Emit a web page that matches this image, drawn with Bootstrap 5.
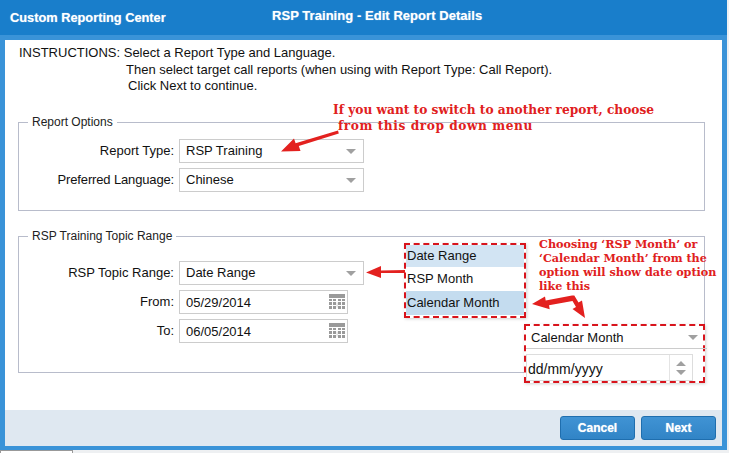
<!DOCTYPE html>
<html lang="en"><head><meta charset="utf-8"><title>RSP Training</title>
<link href="https://cdn.jsdelivr.net/npm/bootstrap@5.3.0/dist/css/bootstrap.min.css" rel="stylesheet">
<style>
html,body{height:453px;overflow:hidden;background:#eef0f2}
body{font:13px/16px "Liberation Sans",Arial,sans-serif;color:#111;position:relative}
.shell{width:727px;height:450px;background:#3a93d8;padding:0 5px 4px;display:flex;flex-direction:column}
.head{height:40px;margin:0 -5px;background:#197ecb;border-bottom:5px solid #3a93d8;color:#fff;font-weight:700;font-size:12.8px;text-shadow:0 0 1px rgba(255,255,255,.6);padding-left:10px}
.head-a{width:262px;padding-top:10px}
.head-b{padding-top:8px;font-size:13px;letter-spacing:.05px}
.body-w{background:#fff;flex:1;padding:4px 17px 0 13px;position:relative}
.instr{height:49px;margin-bottom:22px;padding-top:1px;line-height:16.5px}
.indent-z{padding-left:1px}
.indent-a{padding-left:108px}.indent-b{padding-left:110px}
.group-box{border:1px solid #b8bccb;padding:0;margin:0;position:relative;min-width:0}
.group-one{height:96px}
.group-two{height:144px;margin-top:18px}
.group-box legend{float:none;width:auto;font-size:12px;line-height:14px;margin:-7px 0 0 9px;padding:0 4px;color:#222}
.frow{display:flex;align-items:center;gap:5px;margin-bottom:5px}
.frow label{width:155px;text-align:right;margin:0}
.tight-label{letter-spacing:-.15px}
.group-one .rows-w{padding-top:10px}
.group-two .rows-w{padding-top:18px}
.sel{width:185px;height:24px;border-radius:0;border:1px solid #ccc;padding:0 20px 0 6px;font-size:13px;line-height:22px;color:#111;box-shadow:none;background-color:#fff;
background-image:url("data:image/svg+xml,%3Csvg xmlns='http://www.w3.org/2000/svg' width='10' height='5'%3E%3Cpath d='M0 0h10L5 5z' fill='%23a0a0a0'/%3E%3C/svg%3E");background-size:10px 5px;background-position:right 7px center}
.dt{position:relative;width:169px}
.dt input{height:24px;border-radius:0;border:1px solid #ccc;padding:0 6px;font-size:13px;color:#111}
.dt svg{position:absolute;right:3px;top:4px}
.foot{height:36px;background:#dfe8f1;display:flex;justify-content:flex-end;align-items:center;gap:6px;padding:0 6px 0 0}
.bt{width:75px;height:24px;padding:0;background:linear-gradient(#4093d4,#3184c6);border:1px solid #1f6eae;border-radius:3px;color:#fff;font-size:12px;font-weight:700;line-height:20px;text-shadow:0 0 1px rgba(255,255,255,.7)}
.note{position:absolute;font:700 11.2px/14px "DejaVu Serif",serif;color:#e02020;white-space:nowrap}
.n1{left:333px;top:103px;font-size:12.2px}.n1b{left:338px;top:119px;font-size:12.2px;letter-spacing:.55px}
.n2{left:539px;top:237px;line-height:14px}
.dash{position:absolute;border:2px dashed #d8141c;background:#fff;box-shadow:1px 1px 3px rgba(0,0,0,.18)}
.opts{left:404px;top:243px;width:122px;height:75px;display:flex;flex-direction:column;gap:1px}
.opts div{height:22px;line-height:22px;padding-left:1px}
.o1{background:#d2e4f3}.o3{background:#c4dcef;height:24px!important;line-height:24px!important}
.mini{left:524px;top:324px;width:181px;height:59px}
.mini-s{height:23px;line-height:24px;padding-left:5px;border-bottom:1px solid #ccc;margin-right:-4px;position:relative}
.mini-s svg{position:absolute;right:9px;top:9px}
.mini-i{margin-top:5px;width:167px;height:27px;border:1px solid #ddd;display:flex;align-items:center;padding:3px 0 0 1px;font-size:14px;position:relative}
.mini-i svg{position:absolute;right:5px;top:5px}
.mini-i i{position:absolute;right:22px;top:0;bottom:0;border-left:1px solid #e4e4e4}
.arrows{position:absolute;left:0;top:0;pointer-events:none}
.tail{position:absolute;left:0;bottom:0;width:73px;height:3px;background:#fff;border:1px solid #999;border-bottom:0}
</style></head><body>
<div class="shell">
 <div class="head d-flex"><div class="head-a">Custom Reporting Center</div><div class="head-b">RSP Training - Edit Report Details</div></div>
 <div class="body-w">
  <div class="instr">
   <div class="indent-z">INSTRUCTIONS: Select a Report Type and Language.</div>
   <div class="indent-a">Then select target call reports (when using with Report Type: Call Report).</div>
   <div class="indent-b">Click Next to continue.</div>
  </div>
  <fieldset class="group-box group-one"><legend>Report Options</legend>
   <div class="rows-w">
    <div class="frow"><label>Report Type:</label><select class="form-select sel"><option>RSP Training</option></select></div>
    <div class="frow"><label class="tight-label">Preferred Language:</label><select class="form-select sel"><option>Chinese</option></select></div>
   </div>
  </fieldset>
  <fieldset class="group-box group-two"><legend>RSP Training Topic Range</legend>
   <div class="rows-w">
    <div class="frow"><label>RSP Topic Range:</label><select class="form-select sel"><option>Date Range</option></select></div>
    <div class="frow"><label>From:</label><div class="dt"><input class="form-control" value="05/29/2014"><svg width="16" height="16" viewBox="0 0 16 16"><g fill="#9a9a9a"><path d="M0 0h16v4H0z"/><path d="M0 5h3v2H0zM4 5h3v2H4zM9 5h3v2H9zM13 5h3v2h-3zM0 8h3v3H0zM4 8h3v3H4zM9 8h3v3H9zM13 8h3v3h-3zM0 12h3v3H0zM4 12h3v3H4zM9 12h3v3H9zM13 12h3v3h-3z"/><path d="M7.6 8.5h1v5h-1z" opacity=".4"/></g></svg></div></div>
    <div class="frow"><label>To:</label><div class="dt"><input class="form-control" value="06/05/2014"><svg width="16" height="16" viewBox="0 0 16 16"><g fill="#9a9a9a"><path d="M0 0h16v4H0z"/><path d="M0 5h3v2H0zM4 5h3v2H4zM9 5h3v2H9zM13 5h3v2h-3zM0 8h3v3H0zM4 8h3v3H4zM9 8h3v3H9zM13 8h3v3h-3zM0 12h3v3H0zM4 12h3v3H4zM9 12h3v3H9zM13 12h3v3h-3z"/><path d="M7.6 8.5h1v5h-1z" opacity=".4"/></g></svg></div></div>
   </div>
  </fieldset>
 </div>
 <div class="foot"><button class="btn bt">Cancel</button><button class="btn bt">Next</button></div>
</div>
<div class="note n1">If you want to switch to another report, choose</div>
<div class="note n1b">from this drop down menu</div>
<div class="dash opts"><div class="o1">Date Range</div><div>RSP Month</div><div class="o3">Calendar Month</div></div>
<div class="note n2">Choosing ‘RSP Month’ or<br>‘Calendar Month’ from the<br>option will show date option<br>like this</div>
<div class="dash mini">
 <div class="mini-s">Calendar Month<svg width="10" height="5"><path d="M0 0h10L5 5z" fill="#a0a0a0"/></svg></div>
 <div class="mini-i">dd/mm/yyyy<i></i><svg width="12" height="16"><path d="M6 1l5 5H1zM1 10h10l-5 5z" fill="#a0a0a0"/></svg></div>
</div>
<svg class="arrows" width="729" height="453" fill="#e3211f">
 <path d="M338 130.500l.8 3-40 12.500 1.700 5-19.500 .5 13-13 1.600 4.800z"/>
 <path d="M405 270v3h-24v5l-15-5.500 15-6.500v4.500z"/>
 <path d="M532 304l13-7.500 .7 4 26.300-5 2.300 0 4.200 7 3.500-2 3 17.500-12.500-9 3.500-2-3.500-6-23.500 4.300 .7 4z"/>
</svg>
<div class="tail"></div>
</body></html>
